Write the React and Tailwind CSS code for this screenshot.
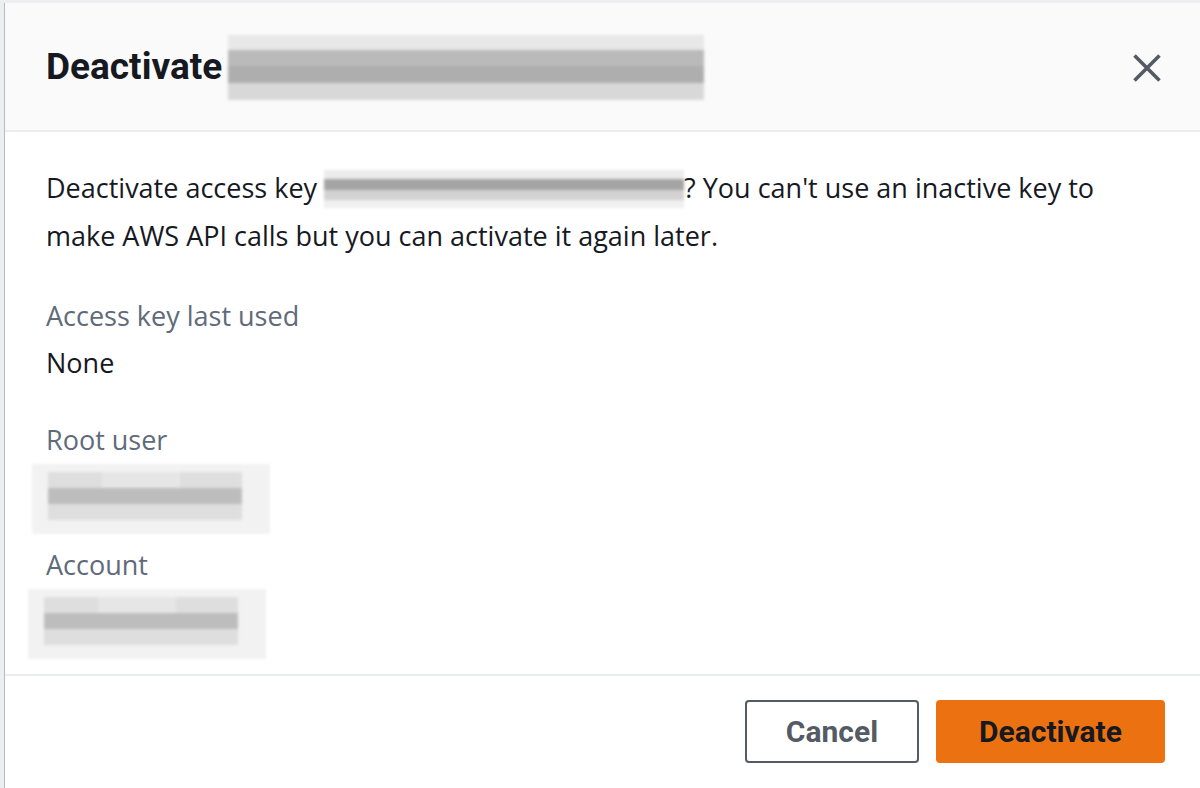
function Redact({ w, h, rows, className = "" }) {
  return (
    <div className={"flex flex-col overflow-hidden blur-[1.5px] " + className} style={{ width: w, height: h }}>
      {rows.map((r, i) => (
        <div key={i} style={{ height: r[0], background: r[1] }} />
      ))}
    </div>
  );
}

function ValueRedact({ offset }) {
  return (
    <div className="relative h-[70px] bg-[#f2f2f2] blur-[1.5px]" style={{ width: 238, marginLeft: offset }}>
      <div className="absolute left-[16px] right-[28px] top-[8px] bottom-[14px] bg-[#dedede]" />
      <div className="absolute left-[16px] right-[28px] top-[24px] h-[16px] bg-[#bdbdbd]" />
      <div className="absolute left-[70px] right-[90px] top-[8px] h-[16px] bg-[#e6e6e6]" />
    </div>
  );
}

export default function App() {
  return (
    <div className="w-[1200px] h-[788px] overflow-hidden bg-[#eceeef] pt-[3px] pl-[4px] [font-family:Roboto,'Noto_Sans',sans-serif]">
      <div className="h-[785px] bg-white border-l border-[#b4bcc0] flex flex-col">
        <div className="h-[129px] shrink-0 bg-[#fafafa] border-b-2 border-[#eaeded] flex items-center pl-[41px] pr-[39px]">
          <h2 className="text-[37px] font-bold text-[#16191f] leading-none">Deactivate</h2>
          <Redact
            w={476}
            h={65}
            className="ml-[6px] mt-[2px]"
            rows={[
              [15, "#e8e8e8"],
              [16, "#bababa"],
              [17, "#aeaeae"],
              [17, "#d8d8d8"],
            ]}
          />
          <div className="flex-1" />
          <svg width="28" height="28" viewBox="0 0 28 28" className="mt-[2px]">
            <path d="M1.5 1.5 L26.5 26.5 M26.5 1.5 L1.5 26.5" stroke="#545b64" strokeWidth="3.6" fill="none" />
          </svg>
        </div>

        <div className="flex-1 pl-[41px] pt-[32px] text-[27px] leading-[48px] text-[#16191f] [font-family:'Open_Sans',sans-serif]">
          <p>
            Deactivate access key{" "}
            <span className="inline-block align-middle -mt-[4px]">
              <Redact
                w={360}
                h={38}
                rows={[
                  [9, "#ececec"],
                  [11, "#a4a4a4"],
                  [10, "#d2d2d2"],
                  [8, "#f0f0f0"],
                ]}
              />
            </span>
            ? You can't use an inactive key to
            <br />
            make AWS API calls but you can activate it again later.
          </p>

          <div className="mt-[32px] leading-[47px]">
            <div className="text-[#5f6b7a]">Access key last used</div>
            <div>None</div>
          </div>

          <div className="mt-[30px] leading-[47px]">
            <div className="text-[#5f6b7a]">Root user</div>
            <div className="mt-[1px]">
              <ValueRedact offset={-14} />
            </div>
          </div>

          <div className="mt-[7px] leading-[47px]">
            <div className="text-[#5f6b7a]">Account</div>
            <div className="mt-[1px]">
              <ValueRedact offset={-18} />
            </div>
          </div>
        </div>

        <div className="h-[114px] shrink-0 border-t-2 border-[#eaeded] flex justify-end items-start pt-[24px] pr-[35px] gap-[17px]">
          <button className="w-[174px] h-[63px] border-2 border-[#545b64] rounded-[4px] bg-white text-[30px] font-bold text-[#545b64]">
            Cancel
          </button>
          <button className="w-[229px] h-[63px] rounded-[4px] bg-[#ec7211] text-[30px] font-bold text-[#16191f]">
            Deactivate
          </button>
        </div>
      </div>
    </div>
  );
}
